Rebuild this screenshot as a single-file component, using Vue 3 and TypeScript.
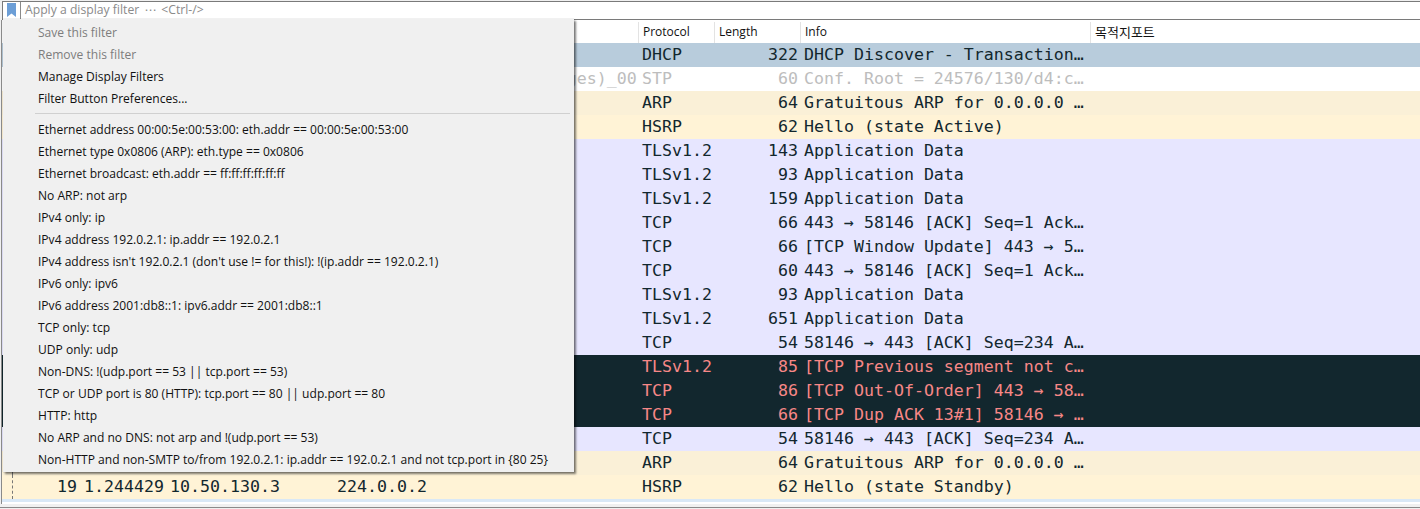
<script setup lang="ts">
interface Row { kind: string; no?: string; time?: string; src?: string; dst?: string; proto: string; len: string; info: string }
const rows: Row[] = [
  { kind: 'dhcp', proto: 'DHCP', len: '322', info: 'DHCP Discover - Transaction…' },
  { kind: 'stp', dst: 'Spanning-tree-(for-bridges)_00', proto: 'STP', len: '60', info: 'Conf. Root = 24576/130/d4:c…' },
  { kind: 'arp', proto: 'ARP', len: '64', info: 'Gratuitous ARP for 0.0.0.0 …' },
  { kind: 'hsrp', proto: 'HSRP', len: '62', info: 'Hello (state Active)' },
  { kind: 'tcp', proto: 'TLSv1.2', len: '143', info: 'Application Data' },
  { kind: 'tcp', proto: 'TLSv1.2', len: '93', info: 'Application Data' },
  { kind: 'tcp', proto: 'TLSv1.2', len: '159', info: 'Application Data' },
  { kind: 'tcp', proto: 'TCP', len: '66', info: '443 → 58146 [ACK] Seq=1 Ack…' },
  { kind: 'tcp', proto: 'TCP', len: '66', info: '[TCP Window Update] 443 → 5…' },
  { kind: 'tcp', proto: 'TCP', len: '60', info: '443 → 58146 [ACK] Seq=1 Ack…' },
  { kind: 'tcp', proto: 'TLSv1.2', len: '93', info: 'Application Data' },
  { kind: 'tcp', proto: 'TLSv1.2', len: '651', info: 'Application Data' },
  { kind: 'tcp', proto: 'TCP', len: '54', info: '58146 → 443 [ACK] Seq=234 A…' },
  { kind: 'bad', proto: 'TLSv1.2', len: '85', info: '[TCP Previous segment not c…' },
  { kind: 'bad', proto: 'TCP', len: '86', info: '[TCP Out-Of-Order] 443 → 58…' },
  { kind: 'bad', proto: 'TCP', len: '66', info: '[TCP Dup ACK 13#1] 58146 → …' },
  { kind: 'tcp', proto: 'TCP', len: '54', info: '58146 → 443 [ACK] Seq=234 A…' },
  { kind: 'arp', proto: 'ARP', len: '64', info: 'Gratuitous ARP for 0.0.0.0 …' },
  { kind: 'hsrp', no: '19', time: '1.244429', src: '10.50.130.3', dst: '224.0.0.2', proto: 'HSRP', len: '62', info: 'Hello (state Standby)' },
]
const topItems = [
  { label: 'Save this filter', off: true },
  { label: 'Remove this filter', off: true },
  { label: 'Manage Display Filters', off: false },
  { label: 'Filter Button Preferences...', off: false },
]
const filters = [
  'Ethernet address 00:00:5e:00:53:00: eth.addr == 00:00:5e:00:53:00',
  'Ethernet type 0x0806 (ARP): eth.type == 0x0806',
  'Ethernet broadcast: eth.addr == ff:ff:ff:ff:ff:ff',
  'No ARP: not arp',
  'IPv4 only: ip',
  'IPv4 address 192.0.2.1: ip.addr == 192.0.2.1',
  "IPv4 address isn't 192.0.2.1 (don't use != for this!): !(ip.addr == 192.0.2.1)",
  'IPv6 only: ipv6',
  'IPv6 address 2001:db8::1: ipv6.addr == 2001:db8::1',
  'TCP only: tcp',
  'UDP only: udp',
  'Non-DNS: !(udp.port == 53 || tcp.port == 53)',
  'TCP or UDP port is 80 (HTTP): tcp.port == 80 || udp.port == 80',
  'HTTP: http',
  'No ARP and no DNS: not arp and !(udp.port == 53)',
  'Non-HTTP and non-SMTP to/from 192.0.2.1: ip.addr == 192.0.2.1 and not tcp.port in {80 25}',
]
</script>

<template>
  <div class="app">
    <div class="filterbar">
      <div class="bookmark">
        <svg width="9" height="14" viewBox="0 0 9 14"><path d="M0 0H9V14L4.5 10.5L0 14Z" fill="#6c9ed6" /></svg>
      </div>
      <div class="placeholder">Apply a display filter<span class="dots">⋯</span>&lt;Ctrl-/&gt;</div>
    </div>
    <div class="list">
      <div class="header">
        <div class="hcell c-gap"></div>
        <div class="hcell c-proto">Protocol</div>
        <div class="hcell c-len">Length</div>
        <div class="hcell c-info">Info</div>
        <div class="hcell c-port">목적지포트</div>
      </div>
      <div class="rows">
        <div v-for="(r, i) in rows" :key="i" class="row" :class="r.kind">
          <div class="tree"></div>
          <div class="c-no">{{ r.no }}</div>
          <div class="c-time">{{ r.time }}</div>
          <div class="c-src">{{ r.src }}</div>
          <div class="c-dst">{{ r.dst }}</div>
          <div class="c-proto cell">{{ r.proto }}</div>
          <div class="c-len cell num">{{ r.len }}</div>
          <div class="c-info cell">{{ r.info }}</div>
        </div>
      </div>
    </div>
    <div class="footer"></div>
    <div class="menu">
      <div v-for="t in topItems" :key="t.label" class="item" :class="{ off: t.off }">{{ t.label }}</div>
      <div class="sep"></div>
      <div v-for="f in filters" :key="f" class="item">{{ f }}</div>
    </div>
  </div>
</template>

<style>
html, body { margin: 0; background: #f0f0f0; overflow: hidden; }
</style>

<style scoped>
.app {
  position: relative;
  width: 1420px;
  height: 509px;
  overflow: hidden;
  background: #f0f0f0;
  font-family: "Open Sans", "Noto Sans CJK KR", sans-serif;
}
.filterbar {
  display: flex;
  box-sizing: border-box;
  height: 19px;
  margin-top: 1px;
  background: #fff;
  border-top: 1px solid #7a7a7a;
  border-bottom: 1px solid #7a7a7a;
  border-left: 1px solid #7a7a7a;
  margin-left: 2px;
}
.bookmark {
  box-sizing: border-box;
  width: 18px;
  display: flex;
  padding: 1px 0 0 4px;
  border-right: 1px solid #8a8a8a;
}
.placeholder {
  padding-left: 4px;
  font-size: 12.2px;
  line-height: 15px;
  color: #8a8a8a;
  white-space: nowrap;
}
.dots {
  display: inline-block;
  width: 22px;
  text-align: center;
  font-family: "DejaVu Sans", sans-serif;
}
.list {
  box-sizing: border-box;
  height: 484px;
  border-left: 1px solid #8a8a8a;
  margin-left: 1px;
  background: #fff;
  padding-top: 2px;
}
.header {
  display: flex;
  height: 21px;
  background: #fff;
  font-size: 12px;
  line-height: 20px;
  color: #111;
}
.hcell {
  box-sizing: border-box;
  padding-left: 4px;
  border-right: 1px solid #e3e3e3;
}
.c-gap { width: 637px; flex: none; }
.c-proto { width: 76px; flex: none; }
.c-len { width: 86px; flex: none; }
.c-info { width: 290px; flex: none; }
.c-port {
  flex: 1;
  border-right: 0;
  font-family: "Noto Sans CJK KR", sans-serif;
  font-size: 13px;
}
.rows {
  height: 456px;
  border-bottom: 3px solid #d9e8f6;
}
.row {
  position: relative;
  display: flex;
  height: 24px;
  font-family: "DejaVu Sans Mono", monospace;
  font-size: 16.6px;
  line-height: 23px;
  white-space: pre;
}
.tree { width: 10px; flex: none; border-right: 1px dashed #777; }
.c-no { width: 64px; flex: none; text-align: right; box-sizing: border-box; }
.c-time { width: 86px; flex: none; padding-left: 7px; box-sizing: border-box; }
.c-src { width: 167px; flex: none; box-sizing: border-box; padding-left: 7px; }
.c-dst { width: 309px; flex: none; box-sizing: border-box; padding-left: 7px; }
.cell { box-sizing: border-box; padding-left: 4px; overflow: hidden; }
.num { text-align: right; padding: 0 3px 0 0; }
.c-proto.cell { padding-left: 3px; }
.c-info.cell { padding-left: 3px; }
.dhcp { background: #b8ccdc; color: #12272e; }
.stp { background: #fff; color: #bdbdbd; }
.arp { background: #faf0d7; color: #12272e; }
.hsrp { background: #fff3d6; color: #12272e; }
.tcp { background: #e7e6ff; color: #12272e; }
.bad { background: #12272e; color: #f78787; }
.footer {
  height: 1px;
  margin-top: 3px;
  background: #8a8a8a;
}
.menu {
  position: absolute;
  left: 3px;
  top: 19px;
  box-sizing: border-box;
  width: 571px;
  height: 453px;
  padding: 2px 0;
  background: #f0f0f0;
  box-shadow: 2px 2px 2px rgba(0, 0, 0, 0.5), 0 0 1px rgba(0, 0, 0, 0.3);
  font-size: 12.05px;
  color: #111;
}
.item {
  box-sizing: border-box;
  height: 22px;
  padding-top: 1px;
  line-height: 22px;
  padding-left: 35px;
  white-space: nowrap;
}
.item.off { color: #7d7d7d; }
.sep {
  height: 1px;
  margin: 4px 4px 4px 32px;
  background: #d0d0d0;
}
</style>
